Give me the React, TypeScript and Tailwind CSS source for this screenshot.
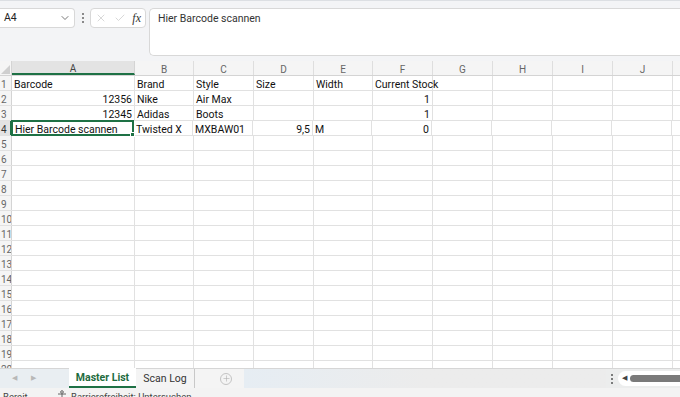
import * as React from "react";
import { ChevronDown, X, Check, Plus } from "lucide-react";

const cols = [
  { key: "A", w: 123 },
  { key: "B", w: 59 },
  { key: "C", w: 60 },
  { key: "D", w: 60 },
  { key: "E", w: 59 },
  { key: "F", w: 60 },
  { key: "G", w: 60 },
  { key: "H", w: 60 },
  { key: "I", w: 60 },
  { key: "J", w: 60 },
  { key: "K", w: 60 },
];

type Cell = { text: string; right?: boolean };

const data: Record<number, Cell[]> = {
  1: [
    { text: "Barcode" },
    { text: "Brand" },
    { text: "Style" },
    { text: "Size" },
    { text: "Width" },
    { text: "Current Stock" },
  ],
  2: [
    { text: "12356", right: true },
    { text: "Nike" },
    { text: "Air Max" },
    { text: "" },
    { text: "" },
    { text: "1", right: true },
  ],
  3: [
    { text: "12345", right: true },
    { text: "Adidas" },
    { text: "Boots" },
    { text: "" },
    { text: "" },
    { text: "1", right: true },
  ],
  4: [
    { text: "Hier Barcode scannen" },
    { text: "Twisted X" },
    { text: "MXBAW01" },
    { text: "9,5", right: true },
    { text: "M" },
    { text: "0", right: true },
  ],
};

const rows = Array.from({ length: 20 }, (_, i) => i + 1);

const FormulaBar = () => (
  <div className="h-[61px] shrink-0 bg-[#f3f4f6] border-t border-[#dcdfe3] flex items-start pt-[7px]">
    <div className="h-[20px] w-[75px] rounded-r-[4px] bg-white border border-l-0 border-[#d8d8d8] flex items-center justify-between pl-[4px] pr-[3px] text-[10.5px] text-[#222]">
      <span>A4</span>
      <ChevronDown className="h-[12px] w-[12px] text-[#555]" strokeWidth={1.6} />
    </div>
    <div className="w-[15px] h-[20px] flex flex-col items-center justify-center gap-[2px]">
      <span className="h-[2px] w-[2px] rounded-full bg-[#666]" />
      <span className="h-[2px] w-[2px] rounded-full bg-[#666]" />
      <span className="h-[2px] w-[2px] rounded-full bg-[#666]" />
    </div>
    <div className="h-[20px] w-[56px] rounded-[4px] bg-white border border-[#d8d8d8] flex items-center justify-between pl-[4px] pr-[4px]">
      <X className="h-[12px] w-[12px] text-[#c2c2c2]" strokeWidth={1.3} />
      <Check className="h-[12px] w-[12px] text-[#c2c2c2]" strokeWidth={1.3} />
      <span className="italic text-[12px] text-[#333] leading-none" style={{ fontFamily: "'Liberation Serif', serif" }}>
        fx
      </span>
    </div>
    <div className="ml-[3px] flex-1 h-[48px] rounded-l-[5px] bg-white border border-r-0 border-[#d8d8d8] pl-[8px] pt-[2px] text-[10.5px] text-[#333]">
      Hier Barcode scannen
    </div>
  </div>
);

const Grid = () => (
  <div className="flex-1 overflow-hidden bg-white">
    <div className="flex h-[15px] bg-[#f5f5f5] border-b border-[#d4d4d4]">
      <div className="w-[12px] shrink-0 border-r border-[#d4d4d4] relative">
        <svg className="absolute right-[1px] bottom-[1px]" width="9" height="9" viewBox="0 0 9 9">
          <path d="M9 0 L9 9 L0 9 Z" fill="#cfcfcf" />
        </svg>
      </div>
      {cols.map((c) => (
        <div
          key={c.key}
          style={{ width: c.w }}
          className={
            c.key === "A"
              ? "shrink-0 flex items-center justify-center pt-[3px] text-[10px] text-[#444] bg-[#e3e3e3] border-r border-[#d4d4d4] border-b-2 border-b-[#1e7145]"
              : "shrink-0 flex items-center justify-center pt-[2px] text-[10px] text-[#666] border-r border-[#dedede]"
          }
        >
          {c.key}
        </div>
      ))}
    </div>
    {rows.map((r) => (
      <div key={r} className="flex h-[15px] border-b border-[#e1e1e1]">
        <div
          className={
            r === 4
              ? "w-[12px] shrink-0 bg-[#e3e3e3] border-r-2 border-[#1e7145] text-[10px] text-[#333] pl-[1px] pt-[2px] leading-[13px] overflow-hidden whitespace-nowrap"
              : "w-[12px] shrink-0 bg-[#f5f5f5] border-r border-[#d4d4d4] text-[10px] text-[#666] pl-[1px] pt-[2px] leading-[13px] overflow-hidden whitespace-nowrap"
          }
        >
          {r}
        </div>
        {cols.map((c, i) => {
          const cell = data[r]?.[i];
          const selected = r === 4 && c.key === "A";
          return (
            <div
              key={c.key}
              style={{ width: c.w }}
              className={
                selected
                  ? "shrink-0 relative border-2 border-[#1e7145] -my-[1px] -ml-[1px] pl-[2px] pt-[1px] text-[10.5px] leading-[13px] text-[#111] whitespace-nowrap"
                  : `shrink-0 border-r border-[#e1e1e1] px-[2px] pt-[2px] text-[10.5px] leading-[13px] text-[#111] whitespace-nowrap overflow-visible ${cell?.right ? "text-right" : ""}`
              }
            >
              {cell?.text}
              {selected && (
                <span className="absolute -right-[3px] -bottom-[3px] h-[5px] w-[5px] bg-[#1e7145] border border-white" />
              )}
            </div>
          );
        })}
      </div>
    ))}
  </div>
);

const TabBar = () => (
  <div className="h-[20px] shrink-0 flex items-stretch bg-[#eceded] border-t border-[#d6d6d6]">
    <div className="w-[69px] shrink-0 bg-[#e9eef2] flex items-center pl-[12px] gap-[14px] text-[7px] text-[#b8b8b8]">
      <span>◀</span>
      <span>▶</span>
    </div>
    <div className="w-[67px] shrink-0 bg-white border-b-2 border-[#1e7145] -mt-[1px] pt-[2px] flex items-center justify-center text-[10.5px] font-bold text-[#1e6b3e]">
      Master List
    </div>
    <div className="w-[59px] shrink-0 bg-[#f4f4f4] border-r border-[#c8c8c8] pt-[1px] flex items-center justify-center text-[10.5px] text-[#333]">
      Scan Log
    </div>
    <div className="w-[25px] shrink-0 bg-[#f4f4f4]" />
    <div className="w-[12px] flex items-center justify-center bg-[#f4f4f4]">
      <div className="h-[12px] w-[12px] shrink-0 rounded-full border border-[#c4c4c4] flex items-center justify-center">
        <Plus className="h-[9px] w-[9px] text-[#b0b0b0]" strokeWidth={1.6} />
      </div>
    </div>
    <div className="w-[12px] bg-[#f4f4f4]" />
    <div className="flex-1 bg-gradient-to-r from-[#e6edf3] via-[#ececec] to-[#ececec]" />
    <div className="w-[12px] flex flex-col items-center justify-center gap-[2px]">
      <span className="h-[2px] w-[2px] rounded-full bg-[#555]" />
      <span className="h-[2px] w-[2px] rounded-full bg-[#555]" />
      <span className="h-[2px] w-[2px] rounded-full bg-[#555]" />
    </div>
    <div className="w-[62px] shrink-0 flex items-center bg-white rounded-l-full pl-[4px] gap-[3px] my-[2px]">
      <span className="text-[7px] text-[#444] leading-none">◀</span>
      <div className="flex-1 h-[7px] rounded-l-full bg-[#7a7a7a]" />
    </div>
  </div>
);

const StatusBar = () => (
  <div className="h-[9px] shrink-0 bg-[#f3f3f3] flex items-start overflow-hidden text-[9.5px] text-[#444] leading-[12px] pt-[3px]">
    <span className="pl-[3px] w-[57px]">Bereit</span>
    <svg width="10" height="10" viewBox="0 0 10 10" className="-mt-[1px]">
      <circle cx="5" cy="2" r="1.3" fill="none" stroke="#555" strokeWidth="0.9" />
      <path d="M1 4 H9 M5 4 V7 M3 10 L5 7 L7 10" fill="none" stroke="#555" strokeWidth="0.9" />
    </svg>
    <span className="pl-[4px]">Barrierefreiheit: Untersuchen</span>
  </div>
);

export default function App() {
  return (
    <div
      className="w-[680px] h-[397px] overflow-hidden flex flex-col bg-[#f3f3f3]"
      style={{ fontFamily: "Roboto, 'Noto Sans', sans-serif" }}
    >
      <FormulaBar />
      <Grid />
      <TabBar />
      <StatusBar />
    </div>
  );
}
